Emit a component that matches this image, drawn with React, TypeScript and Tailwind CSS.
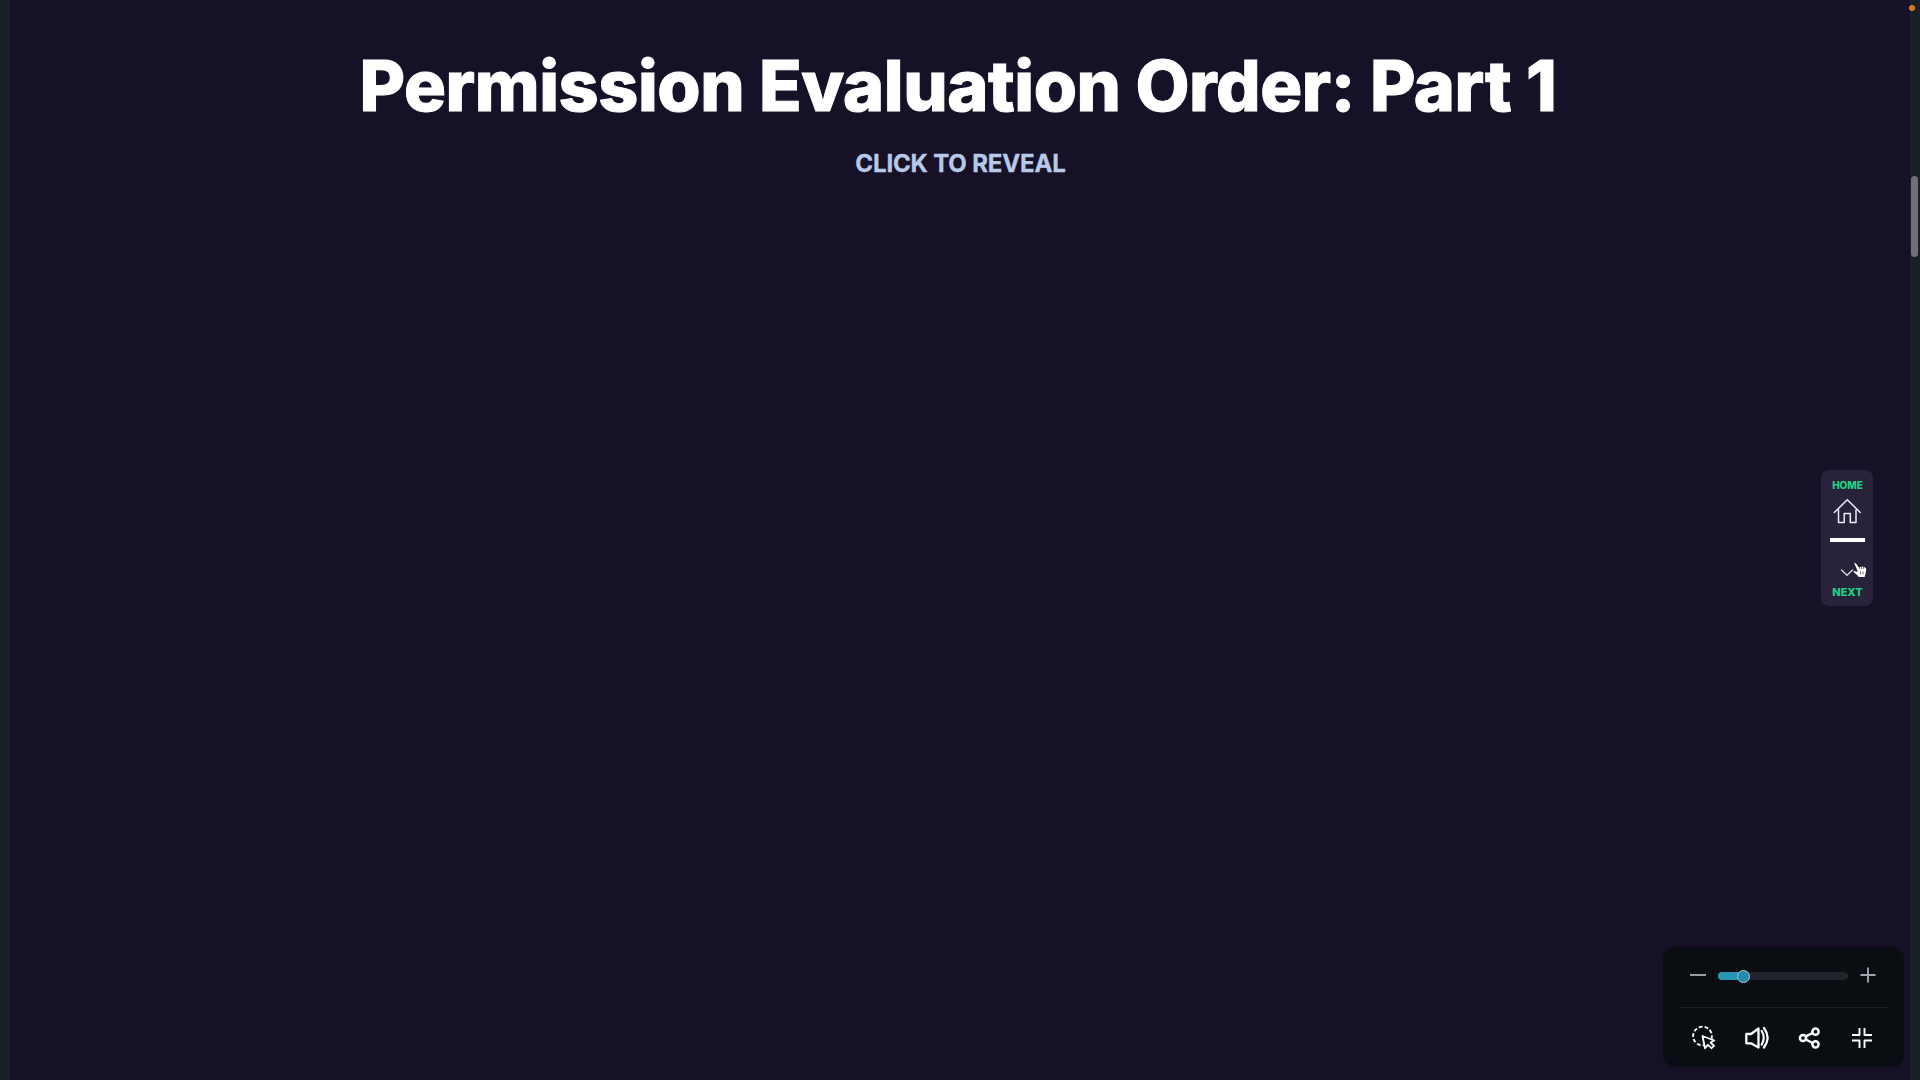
function Controls() {
  return (
    <div className="absolute left-[1663px] top-[947px] flex h-[120px] w-[241px] flex-col rounded-xl bg-[#0a0e13]">
      <div className="flex h-[60px] items-center pl-[27px]">
        <svg width="16" height="16" viewBox="0 0 16 16" className="mb-[4px]" stroke="#a3a4ad" strokeWidth="1.9">
          <path d="M0 8H16" />
        </svg>
        <div className="relative mb-[2px] ml-[12px] h-[8px] w-[130px] rounded-full bg-[#20242a]">
          <div className="h-full w-[25px] rounded-full bg-[#2695b3]" />
          <div className="absolute left-[18.5px] top-[-2.5px] size-[13px] rounded-full border border-[#9fd0dc] bg-[#238ba9]" />
        </div>
        <svg width="16" height="16" viewBox="0 0 16 16" className="mb-[4px] ml-[12px]" stroke="#a3a4ad" strokeWidth="1.9">
          <path d="M0.5 8H15.5M8 0.5V15.5" />
        </svg>
      </div>
      <div className="mx-[16px] h-px bg-[#1d2026]" />
      <svg width="241" height="59" viewBox="1663 1008 241 59" fill="none" stroke="#fff" strokeLinejoin="round">
        <circle cx="1702.5" cy="1036" r="9.4" strokeWidth="1.9" strokeDasharray="3.7 2.2" strokeDashoffset="1" />
        <path d="M1702.5 1036L1705 1048.3L1707.8 1044.8L1711.5 1048.2L1714 1045.8L1710.5 1042.5L1714.3 1040.5Z" fill="#0a0e13" strokeWidth="1.8" />
        <path d="M1746.3 1034H1751L1758.5 1028.5V1047.5L1751 1043.3H1746.3Z" strokeWidth="2.3" />
        <path d="M1761.7 1031Q1765.7 1037.5 1761.7 1044.7M1764 1028Q1771.2 1037.5 1764 1047.5" strokeWidth="2.2" strokeLinecap="round" />
        <g strokeWidth="2.5">
          <circle cx="1803" cy="1038" r="3.1" />
          <circle cx="1815.5" cy="1031.7" r="3.1" />
          <circle cx="1815.5" cy="1044.3" r="3.1" />
          <path d="M1805.8 1036.4L1812.7 1033M1805.8 1039.5L1812.7 1043" />
        </g>
        <path d="M1859.5 1028V1035H1852M1864.5 1028V1035H1872M1852 1040.5H1859.5V1048M1872 1040.5H1864.5V1048" strokeWidth="1.9" />
      </svg>
    </div>
  );
}

function SlideNav() {
  return (
    <nav className="absolute left-[1821px] top-[470px] flex h-[136px] w-[52px] flex-col items-center rounded-lg bg-[#28223a] font-extrabold text-[#1fcf83]">
      <span className="mt-[8px] pl-px text-[10px] leading-[14px]">HOME</span>
      <svg width="28" height="26" viewBox="1833 498 28 26" className="mt-[6px]" fill="none" stroke="#eeeaf6" strokeWidth="1.5" strokeLinejoin="round" strokeLinecap="round">
        <path d="M1834.3 512.5L1847.3 499.8L1860.3 512.5M1838.5 510V522.5H1844.2V513.5H1850.3V522.5H1856V510" />
      </svg>
      <div className="mt-[14px] h-[4px] w-[35px] bg-white" />
      <svg width="14" height="9" viewBox="0 0 14 9" className="mt-[27px]" fill="none" stroke="#d8d5e2" strokeWidth="1.4" strokeLinecap="round" strokeLinejoin="round">
        <path d="M1.5 1L7 6.2L12.5 1" />
      </svg>
      <span className="mt-[7px] pl-px text-[11px] leading-[14px]">NEXT</span>
    </nav>
  );
}

function HandCursor() {
  return (
    <svg className="absolute left-[1852px] top-[561px]" width="16" height="18" viewBox="0 0 16 18" fill="#fff" stroke="#0d0a19" strokeWidth="0.8" strokeLinejoin="round">
      <path d="M1.9 2.6Q2.7 0.8 4.3 2.2L7 6Q7.9 4.5 9.2 5.6Q10.5 4.4 11.4 5.6Q13 4.9 13.4 6.5Q15 6.6 14.7 8.7L14 12.8L13 16.5H6.7L5.2 14.5L1 11.2Q0.6 9.6 2.2 9.5L5.2 10.3Z" />
      <path d="M7.2 5.8L7.9 8M9.4 5.4L9.9 8M11.6 5.6L11.8 8M8.5 10.5V13.4M11 10.5V13.4" strokeWidth="0.6" />
    </svg>
  );
}

export default function App() {
  return (
    <div className="relative h-[1080px] w-[1920px] overflow-hidden bg-[#1b2028] px-[10px] font-['Inter',sans-serif]">
      <main className="flex h-full flex-col items-center bg-[#161126]">
        <h1 className="mt-[44px] whitespace-nowrap pr-[4px] text-[70px] font-extrabold leading-[84px] tracking-[-0.45px] text-white [-webkit-text-stroke:1px_white]">Permission Evaluation Order: Part 1</h1>
        <p className="mt-[21px] whitespace-nowrap pl-px text-[24px] font-bold leading-[30px] tracking-[-0.15px] text-[#b6c9e6] [-webkit-text-stroke:0.35px_#b6c9e6]">CLICK TO REVEAL</p>
      </main>
      <SlideNav />
      <HandCursor />
      <Controls />
      <div className="absolute left-[1911px] top-[176px] h-[81px] w-[7px] rounded-full bg-[#6f6f79]" />
      <div className="absolute left-[1909px] top-[5px] size-[6px] rounded-full bg-[#d87a1c]" />
    </div>
  );
}
